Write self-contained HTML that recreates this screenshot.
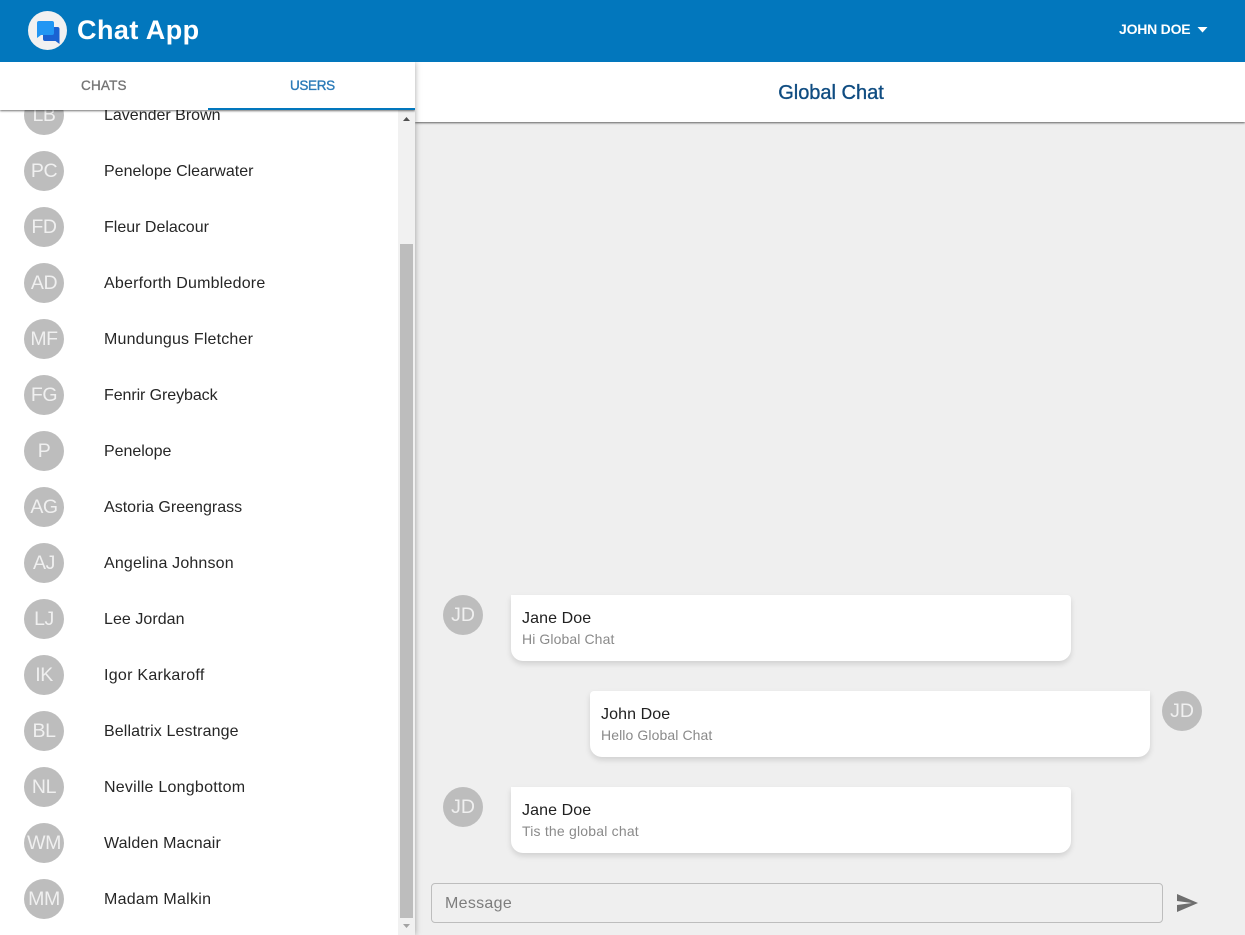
<!DOCTYPE html>
<html>
<head>
<meta charset="utf-8">
<style>
html,body{margin:0;padding:0;width:1245px;height:935px;overflow:hidden;background:#efefef;font-family:"Liberation Sans",sans-serif;color:#212121}
div,span{position:absolute;white-space:nowrap;box-sizing:border-box}
#bar{left:0;top:0;width:1245px;height:62px;background:#0277bd;z-index:5}
#side{left:0;top:62px;width:415px;height:873px;background:#fff;box-shadow:0 0 6px rgba(0,0,0,.35);z-index:3;overflow:hidden}
#tabs{left:0;top:0;width:415px;height:48px;background:#fff;box-shadow:0 1px 2px rgba(0,0,0,.55);z-index:4}
.av{left:24px;width:40px;height:40px;border-radius:50%;background:#bdbdbd;color:#f0f0f0;font-size:19.5px;line-height:41px;text-align:center;letter-spacing:-.4px}
.nm{left:104px;font-size:16px;line-height:20px;color:#262626}
#head{left:415px;top:62px;width:830px;height:60px;background:#fff;box-shadow:0 1px 2px rgba(0,0,0,.6);z-index:2}
.msg{width:560px;height:66px;background:#fff;border-radius:0 4px 12px 12px;box-shadow:0 3px 6px rgba(0,0,0,.13)}
.msg b{position:absolute;left:11px;top:14px;font-weight:400;font-size:16px;line-height:20px;letter-spacing:.1px;color:#212121}
.msg i{position:absolute;left:11px;top:35px;font-style:normal;font-size:14px;line-height:18px;letter-spacing:.1px;color:#8a8a8a}
.mav{width:40px;height:40px;border-radius:50%;background:#bdbdbd;color:#f0f0f0;font-size:19.5px;line-height:41px;text-align:center}
</style>
</head>
<body>
<div id="bar">
  <div style="left:28px;top:11px;width:39px;height:39px;border-radius:50%;background:#f1f1f1"></div>
  <svg style="position:absolute;left:28px;top:11px" width="39" height="39" viewBox="0 0 39 39">
    <path d="M17 16h12.500a2 2 0 0 1 2 2v15l-4-3H17a2 2 0 0 1-2-2V18a2 2 0 0 1 2-2z" fill="#1a62d2"/>
    <path d="M11 10h13a2 2 0 0 1 2 2v10a2 2 0 0 1-2 2H13l-4 3V12a2 2 0 0 1 2-2z" fill="#2196f3"/>
  </svg>
  <span style="left:77px;top:14px;font-size:27px;line-height:32px;font-weight:700;color:#fff;letter-spacing:.45px">Chat App</span>
  <span style="left:1119px;top:21px;font-size:14px;line-height:17px;font-weight:700;color:#fff;letter-spacing:-.22px">JOHN DOE</span>
  <svg style="position:absolute;left:1197px;top:27px" width="11" height="6" viewBox="0 0 11 6"><path d="M.5 0h10L5.500 5.500z" fill="#fff"/></svg>
</div>

<div id="side">
  <div id="tabs">
    <span style="left:81px;top:15px;font-size:13.5px;line-height:17px;font-weight:400;color:#757575;-webkit-text-stroke:.35px #757575;letter-spacing:.2px">CHATS</span>
    <span style="left:290px;top:15px;font-size:13.5px;line-height:17px;color:#2a7ab8;-webkit-text-stroke:.35px #2a7ab8;letter-spacing:-.35px">USERS</span>
    <div style="left:208px;top:46px;width:207px;height:2px;background:#0277bd"></div>
  </div>
  <div class="av" style="top:33px">LB</div><span class="nm" style="top:44px">Lavender Brown</span>
  <div class="av" style="top:89px">PC</div><span class="nm" style="top:100px;letter-spacing:0">Penelope Clearwater</span>
  <div class="av" style="top:145px">FD</div><span class="nm" style="top:156px;letter-spacing:0">Fleur Delacour</span>
  <div class="av" style="top:201px">AD</div><span class="nm" style="top:212px;letter-spacing:.2px">Aberforth Dumbledore</span>
  <div class="av" style="top:257px">MF</div><span class="nm" style="top:268px;letter-spacing:.18px">Mundungus Fletcher</span>
  <div class="av" style="top:313px">FG</div><span class="nm" style="top:324px;letter-spacing:-.08px">Fenrir Greyback</span>
  <div class="av" style="top:369px">P</div><span class="nm" style="top:380px;letter-spacing:-.03px">Penelope</span>
  <div class="av" style="top:425px">AG</div><span class="nm" style="top:436px;letter-spacing:.02px">Astoria Greengrass</span>
  <div class="av" style="top:481px">AJ</div><span class="nm" style="top:492px;letter-spacing:.16px">Angelina Johnson</span>
  <div class="av" style="top:537px">LJ</div><span class="nm" style="top:548px;letter-spacing:.05px">Lee Jordan</span>
  <div class="av" style="top:593px">IK</div><span class="nm" style="top:604px;letter-spacing:.28px">Igor Karkaroff</span>
  <div class="av" style="top:649px">BL</div><span class="nm" style="top:660px;letter-spacing:.11px">Bellatrix Lestrange</span>
  <div class="av" style="top:705px">NL</div><span class="nm" style="top:716px;letter-spacing:.24px">Neville Longbottom</span>
  <div class="av" style="top:761px">WM</div><span class="nm" style="top:772px;letter-spacing:.14px">Walden Macnair</span>
  <div class="av" style="top:817px">MM</div><span class="nm" style="top:828px;letter-spacing:.27px">Madam Malkin</span>

  <div style="left:398px;top:48px;width:17px;height:825px;background:#f1f1f1;z-index:2"></div>
  <div style="left:400px;top:182px;width:13px;height:674px;background:#bdbdbd;z-index:3"></div>
  <svg style="position:absolute;left:398px;top:48px;z-index:3" width="17" height="17" viewBox="0 0 17 17"><path d="M5 11h7L8.500 7z" fill="#505050"/></svg>
  <svg style="position:absolute;left:398px;top:856px;z-index:3" width="17" height="17" viewBox="0 0 17 17"><path d="M5 6h7L8.500 10z" fill="#a3a3a3"/></svg>
</div>

<div id="head">
  <span style="left:1px;width:830px;text-align:center;top:19px;font-size:20px;line-height:24px;color:#0f4c81;-webkit-text-stroke:.35px #0f4c81;letter-spacing:0">Global Chat</span>
</div>

<div class="mav" style="left:443px;top:595px">JD</div>
<div class="msg" style="left:511px;top:595px"><b>Jane Doe</b><i>Hi Global Chat</i></div>

<div class="msg" style="left:590px;top:691px;border-radius:4px 0 12px 12px"><b>John Doe</b><i>Hello Global Chat</i></div>
<div class="mav" style="left:1162px;top:691px">JD</div>

<div class="mav" style="left:443px;top:787px">JD</div>
<div class="msg" style="left:511px;top:787px"><b>Jane Doe</b><i style="letter-spacing:.2px">Tis the global chat</i></div>

<div style="left:431px;top:883px;width:732px;height:40px;border:1px solid #bdbdbd;border-radius:4px"></div>
<span style="left:445px;top:894px;font-size:16px;line-height:20px;color:#7d7d7d;letter-spacing:.3px">Message</span>
<svg style="position:absolute;left:1177px;top:894px" width="21" height="18" viewBox="0 0 21 18"><path d="M0 0l21 9L0 18v-7l15-2L0 7z" fill="#6e6e6e"/></svg>
</body>
</html>
